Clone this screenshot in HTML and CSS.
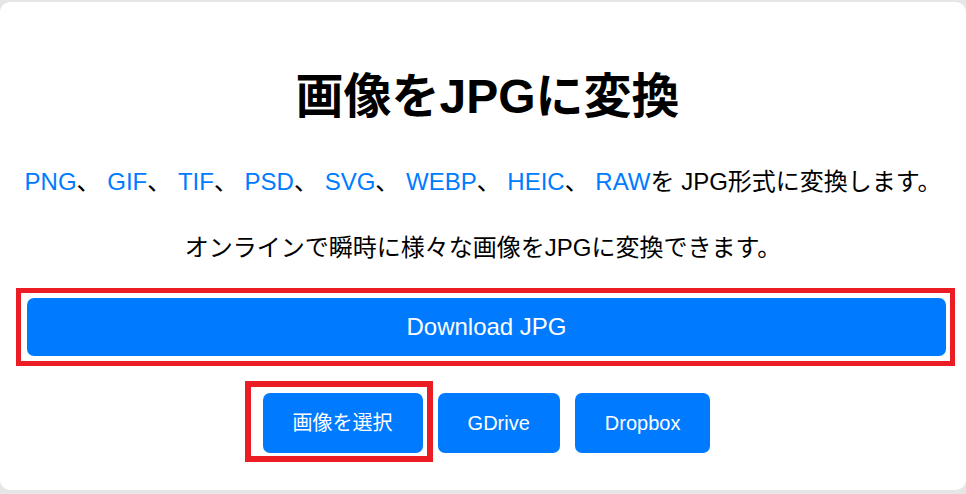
FILE: index.html
```html
<!DOCTYPE html>
<html lang="ja">
<head>
<meta charset="utf-8">
<title>画像をJPGに変換</title>
<link rel="stylesheet" href="styles.css">
</head>
<body>
<main class="card">
  <h1 class="title">画像をJPGに変換</h1>
  <p class="text formats"><a href="#" class="fmt">PNG</a>、 <a href="#" class="fmt">GIF</a>、 <a href="#" class="fmt">TIF</a>、 <a href="#" class="fmt">PSD</a>、 <a href="#" class="fmt">SVG</a>、 <a href="#" class="fmt">WEBP</a>、 <a href="#" class="fmt">HEIC</a>、 <a href="#" class="fmt">RAW</a>を JPG形式に変換します。</p>
  <p class="text lead">オンラインで瞬時に様々な画像をJPGに変換できます。</p>
  <div class="download-wrap annotated annotated-wide">
    <button class="btn-download">Download JPG</button>
  </div>
  <div class="actions">
    <div class="annotated annotated-small">
      <button class="btn">画像を選択</button>
    </div>
    <button class="btn">GDrive</button>
    <button class="btn">Dropbox</button>
  </div>
</main>
</body>
</html>
```

FILE: styles.css
```css
html, body {
  margin: 0;
  padding: 0;
}

body {
  background: #e6e6e6;
  font-family: "Liberation Sans", "Noto Sans CJK JP", Arial, sans-serif;
  color: #000;
}

.card {
  box-sizing: border-box;
  margin-top: 2px;
  height: 488px;
  background: #fff;
  border-radius: 10px;
  padding: 66px 20px 0 27px;
  overflow: hidden;
}

.title {
  margin: 0;
  font-size: 48px;
  line-height: 58px;
  font-weight: bold;
  text-align: center;
  padding-left: 2px;
}

.text {
  margin: 0 -20px 0 -27px;
  font-size: 24px;
  line-height: 30px;
  text-align: center;
  white-space: nowrap;
}

.formats {
  margin-top: 41px;
}

.lead {
  margin-top: 36px;
}

.fmt {
  color: #007bff;
  text-decoration: none;
}

.annotated {
  position: relative;
}

.annotated::after {
  content: "";
  position: absolute;
  border: 5px solid #ec1c24;
  pointer-events: none;
}

.annotated-wide::after {
  top: -10px;
  bottom: -10px;
  left: -11px;
  right: -9px;
}

.annotated-small {
  display: flex;
}

.annotated-small::after {
  top: -12px;
  bottom: -9px;
  left: -18px;
  right: -10px;
  border-width: 6px;
}

.download-wrap {
  margin-top: 35px;
}

.btn-download {
  display: block;
  width: 100%;
  height: 58px;
  border: 0;
  border-radius: 7px;
  background: #007bff;
  color: #fff;
  font-family: "Liberation Sans", "Noto Sans CJK JP", Arial, sans-serif;
  font-size: 24px;
  line-height: 58px;
  padding: 0;
}

.actions {
  margin-top: 37px;
  display: flex;
  justify-content: center;
  gap: 15px;
}

.btn {
  height: 60px;
  border: 0;
  border-radius: 7px;
  background: #007bff;
  color: #fff;
  font-family: "Liberation Sans", "Noto Sans CJK JP", Arial, sans-serif;
  font-size: 20px;
  line-height: 60px;
  padding: 0 30px;
}
```
